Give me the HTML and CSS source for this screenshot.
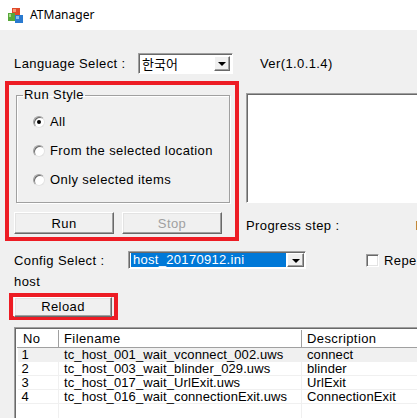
FILE: index.html
```html
<!DOCTYPE html>
<html>
<head>
<meta charset="utf-8">
<link rel="stylesheet" href="styles.css">
</head>
<body>
<div class="window">
  <div class="titlebar">
    <svg class="appicon" width="17" height="17" viewBox="0 0 17 17">
      <rect x="5" y="1" width="8" height="8" fill="#e04a2a"/>
      <rect x="6" y="2" width="3" height="3" fill="#f59a7a"/>
      <rect x="1" y="6" width="7" height="8" fill="#58a83a"/>
      <rect x="2" y="7" width="2" height="3" fill="#a6d98a"/>
      <rect x="8" y="8" width="8" height="8" fill="#2a7ad0"/>
      <rect x="9" y="9" width="3" height="3" fill="#8cc0f0"/>
    </svg>
    <span class="title">ATManager</span>
  </div>
  <div class="client">
    <div class="lang-row">
      <span class="lbl lang-lbl">Language Select :</span>
      <div class="combo lang-combo">
        <span class="combo-text">한국어</span>
        <span class="combo-btn"><span class="arrow"></span></span>
      </div>
      <span class="lbl ver">Ver(1.0.1.4)</span>
    </div>
    <div class="main-row">
      <div class="redbox runbox">
        <fieldset class="group">
          <legend>Run Style</legend>
          <div class="radio-row first"><span class="radio checked"></span><span>All</span></div>
          <div class="radio-row"><span class="radio"></span><span>From the selected location</span></div>
          <div class="radio-row"><span class="radio"></span><span>Only selected items</span></div>
        </fieldset>
        <div class="btn-row">
          <div class="btn">Run</div>
          <div class="btn disabled">Stop</div>
        </div>
      </div>
      <div class="right-panel">
        <div class="logbox"></div>
        <div class="progress-row">
          <span class="lbl">Progress step :</span>
          <span class="lbl pf">F</span>
        </div>
      </div>
    </div>
    <div class="config-row">
      <span class="lbl cfg-lbl">Config Select :</span>
      <div class="combo cfg-combo">
        <span class="combo-text selected">host_20170912.ini</span>
        <span class="combo-btn"><span class="arrow"></span></span>
      </div>
      <span class="checkbox"></span>
      <span class="lbl">Repe</span>
    </div>
    <div class="lbl host">host</div>
    <div class="redbox reloadbox">
      <div class="btn reload">Reload</div>
    </div>
    <div class="listview">
      <table>
        <thead>
          <tr><th class="c-no">No</th><th class="c-file">Filename</th><th class="c-desc">Description</th></tr>
        </thead>
        <tbody>
          <tr class="sel"><td>1</td><td>tc_host_001_wait_vconnect_002.uws</td><td>connect</td></tr>
          <tr><td>2</td><td>tc_host_003_wait_blinder_029.uws</td><td>blinder</td></tr>
          <tr><td>3</td><td>tc_host_017_wait_UrlExit.uws</td><td>UrlExit</td></tr>
          <tr><td>4</td><td>tc_host_016_wait_connectionExit.uws</td><td>ConnectionExit</td></tr>
          <tr class="empty"><td></td><td></td><td></td></tr>
        </tbody>
      </table>
    </div>
  </div>
</div>
</body>
</html>
```

FILE: styles.css
```css
html, body {
  margin: 0;
  padding: 0;
  width: 417px;
  height: 418px;
  overflow: hidden;
  background: #f0f0f0;
}
body {
  font-family: "Liberation Sans", "Noto Sans CJK KR", sans-serif;
  font-size: 13px;
  letter-spacing: 0.4px;
  color: #000;
}
.window {
  width: 417px;
  height: 418px;
  overflow: hidden;
}
.titlebar {
  height: 30px;
  background: #fff;
  display: flex;
  align-items: center;
  padding-left: 7px;
  gap: 6px;
}
.title {
  font-family: "Noto Sans", "Liberation Sans", sans-serif;
  font-size: 12px;
  letter-spacing: 0;
  color: #000;
  margin-top: -1px;
}
.client {
  background: #f0f0f0;
  height: 388px;
}
.lbl {
  white-space: nowrap;
  line-height: 15px;
}
.lang-row {
  display: flex;
  align-items: center;
  height: 21px;
  padding-top: 23px;
  padding-left: 14px;
}
.lang-lbl { width: 124px; flex-shrink: 0; }
.ver { margin-left: 27px; }

.combo {
  display: flex;
  flex-shrink: 0;
  background: #fff;
  border-top: 1px solid #a0a0a0;
  border-left: 1px solid #a0a0a0;
  border-right: 1px solid #fff;
  border-bottom: 1px solid #fff;
  box-shadow: inset 1px 1px 0 #696969;
  box-sizing: border-box;
  padding: 2px;
}
.lang-combo { width: 95px; height: 21px; }
.combo-text {
  flex: 1;
  font-family: "Noto Sans CJK KR", sans-serif;
  font-size: 13px;
  letter-spacing: 0;
  line-height: 15px;
  padding-left: 1px;
}
.combo-btn {
  width: 16px;
  background: #f0f0f0;
  box-sizing: border-box;
  border-top: 1px solid #fff;
  border-left: 1px solid #fff;
  border-right: 1px solid #696969;
  border-bottom: 1px solid #696969;
  box-shadow: inset -1px -1px 0 #a0a0a0;
  display: flex;
  align-items: center;
  justify-content: center;
}
.arrow {
  width: 0;
  height: 0;
  border-left: 4px solid transparent;
  border-right: 4px solid transparent;
  border-top: 4px solid #000;
  margin-top: 1px;
}

.main-row {
  display: flex;
  margin-top: 7px;
}
.redbox {
  border: 4px solid #ed1c24;
  box-sizing: border-box;
  flex-shrink: 0;
}
.runbox {
  margin-left: 5px;
  width: 234px;
  height: 160px;
  padding: 4px 5px 0 7px;
}
.group {
  margin: 0;
  padding: 0;
  border: 1px solid #a0a0a0;
  box-shadow: 1px 1px 0 #fff, inset 1px 1px 0 #fff;
  width: 214px;
  height: 114px;
  box-sizing: border-box;
}
.group legend {
  padding: 0 1px;
  margin-left: 6px;
  line-height: 12px;
  font-size: 13px;
}
.radio-row {
  display: flex;
  align-items: center;
  gap: 5px;
  height: 15px;
  margin-left: 16px;
}
.radio-row.first { margin-top: 13px; }
.radio-row + .radio-row { margin-top: 14px; }
.radio {
  width: 12px;
  height: 12px;
  flex-shrink: 0;
  border-radius: 50%;
  background: #fff;
  box-sizing: border-box;
  border: 1px solid #a0a0a0;
  border-right-color: #e3e3e3;
  border-bottom-color: #e3e3e3;
  box-shadow: inset 1px 1px 0 #696969;
  position: relative;
}
.radio.checked::after {
  content: "";
  position: absolute;
  left: 3px;
  top: 3px;
  width: 4px;
  height: 4px;
  border-radius: 50%;
  background: #000;
}
.btn-row {
  display: flex;
  gap: 8px;
  margin-top: 9px;
  margin-left: -2px;
}
.btn {
  width: 100px;
  height: 22px;
  flex-shrink: 0;
  box-sizing: border-box;
  background: #f0f0f0;
  border-top: 1px solid #fff;
  border-left: 1px solid #fff;
  border-right: 1px solid #696969;
  border-bottom: 1px solid #696969;
  box-shadow: inset -1px -1px 0 #a0a0a0, inset 1px 1px 0 #e3e3e3;
  display: flex;
  align-items: center;
  justify-content: center;
  line-height: 15px;
}
.btn.disabled { color: #a0a0a0; }

.right-panel {
  margin-left: 7px;
  flex: 1;
  display: flex;
  flex-direction: column;
}
.logbox {
  margin-top: 12px;
  height: 110px;
  width: 200px;
  background: #fff;
  box-sizing: border-box;
  border-top: 1px solid #a0a0a0;
  border-left: 1px solid #a0a0a0;
  border-bottom: 1px solid #fff;
  box-shadow: inset 1px 1px 0 #696969;
}
.progress-row {
  display: flex;
  margin-top: 15px;
}
.pf { margin-left: 76px; }

.config-row {
  display: flex;
  align-items: center;
  margin-top: 10px;
  padding-left: 14px;
  height: 18px;
}
.cfg-lbl { width: 114px; flex-shrink: 0; }
.cfg-combo {
  width: 178px;
  height: 18px;
  padding: 1px 1px 1px 2px;
}
.combo-text.selected {
  font-family: "Liberation Sans", sans-serif;
  letter-spacing: 0.3px;
  background: #0078d7;
  color: #fff;
  padding-left: 2px;
  margin-right: 1px;
  line-height: 14px;
}
.cfg-combo .combo-btn { width: 17px; }
.checkbox {
  margin-left: 60px;
  width: 13px;
  height: 13px;
  flex-shrink: 0;
  box-sizing: border-box;
  background: #fff;
  border-top: 1px solid #a0a0a0;
  border-left: 1px solid #a0a0a0;
  border-right: 1px solid #fff;
  border-bottom: 1px solid #fff;
  box-shadow: inset 1px 1px 0 #696969, inset -1px -1px 0 #e3e3e3;
}
.config-row .checkbox + .lbl { margin-left: 5px; }

.host {
  margin-top: 5px;
  padding-left: 14px;
  height: 16px;
}
.reloadbox {
  margin-left: 9px;
  margin-top: 3px;
  width: 109px;
  height: 27px;
  padding: 0 0 0 1px;
  display: flex;
  align-items: center;
}
.btn.reload {
  width: 98px;
  height: 20px;
}

.listview {
  margin-top: 7px;
  margin-left: 14px;
  width: 420px;
  height: 100px;
  background: #fff;
  box-sizing: border-box;
  border-top: 1px solid #a0a0a0;
  border-left: 1px solid #a0a0a0;
  box-shadow: inset 1px 1px 0 #696969;
  padding: 2px 0 0 2px;
  overflow: hidden;
}
table {
  border-collapse: collapse;
  table-layout: fixed;
  width: 430px;
}
th {
  font-weight: normal;
  text-align: left;
  height: 17px;
  padding: 0 0 0 5px;
  box-sizing: border-box;
  border-right: 1px solid #a0a0a0;
  border-bottom: 1px solid #a0a0a0;
  box-shadow: inset -1px 0 0 #fff;
  background: #fff;
  line-height: 15px;
  white-space: nowrap;
}
th.c-no { width: 41px; border-left: 1px solid #fff; }
th.c-file { width: 243px; }
th.c-desc { width: 146px; }
td {
  height: 13px;
  padding: 0 0 0 5px;
  line-height: 13px;
  letter-spacing: 0.1px;
  border-right: 1px solid #f0f0f0;
  border-bottom: 1px solid #f0f0f0;
  white-space: nowrap;
}
td:first-child { padding-left: 4px; }
tr.sel td { background: #f0f0f0; }
tr.empty td { height: 14px; border-bottom: none; }
```
